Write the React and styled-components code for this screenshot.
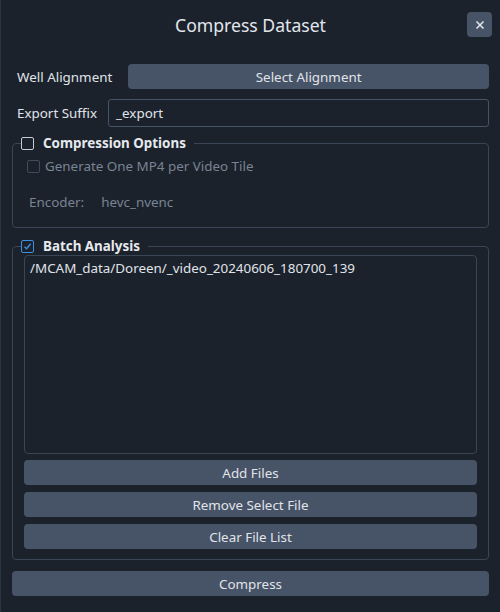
import React from 'react'
import styled, { createGlobalStyle } from 'styled-components'

const GlobalStyle = createGlobalStyle`
  html, body {
    margin: 0;
    padding: 0;
    background: #1b222c;
  }
  body {
    font-family: "Noto Sans", "DejaVu Sans", sans-serif;
    color: #dfe3e9;
  }
`

const Dialog = styled.div`
  width: 500px;
  height: 612px;
  box-sizing: border-box;
  background: #1b222c;
  border-left: 1px solid #2c3541;
  padding: 0 11px 0 11px;
  display: flex;
  flex-direction: column;
  font-size: 13.4px;
`

const Header = styled.header`
  position: relative;
  height: 49px;
  display: flex;
  align-items: center;
  justify-content: center;
`

const Title = styled.h1`
  margin: 0;
  font-size: 17.6px;
  font-weight: 400;
  color: #e2e6ec;
`

const CloseButton = styled.button`
  position: absolute;
  right: -3px;
  top: 12px;
  width: 25px;
  height: 25px;
  border: 0;
  border-radius: 4px;
  background: #475366;
  color: #e6e9ee;
  display: flex;
  align-items: center;
  justify-content: center;
  padding: 0;
`

const Row = styled.div`
  display: flex;
  align-items: center;
  gap: ${p => p.gap || 16}px;
  padding-left: 5px;
  margin-top: ${p => p.top || 0}px;
`

const Label = styled.span`
  white-space: nowrap;
  color: #e0e4ea;
`

const Button = styled.button`
  flex: ${p => (p.grow ? 1 : 'none')};
  height: 25px;
  border: 0;
  border-radius: 4px;
  background: #475366;
  color: #e0e4ea;
  font-family: inherit;
  font-size: 13.4px;
  padding: 0;
  width: 100%;
`

const Input = styled.div`
  flex: 1;
  height: 28px;
  box-sizing: border-box;
  border: 1px solid #475366;
  border-radius: 3px;
  display: flex;
  align-items: center;
  padding-left: 7px;
  color: #e0e4ea;
`

const Group = styled.fieldset`
  margin: ${p => p.top}px 0 0 0;
  padding: 0 11px 11px 11px;
  border: 1px solid #3a4555;
  border-radius: 4px;
  min-width: 0;
  height: ${p => p.h}px;
  box-sizing: border-box;
`

const Legend = styled.legend`
  display: flex;
  align-items: center;
  gap: 9px;
  padding: 0 8px 0 0;
  margin-left: -3px;
  font-weight: 700;
  color: #e6e9ee;
`

const Box = styled.span`
  width: 11px;
  height: 11px;
  border: 1px solid ${p => (p.checked ? '#3d8fe0' : p.disabled ? '#414b59' : '#c6ccd4')};
  border-radius: 2px;
  display: inline-flex;
  align-items: center;
  justify-content: center;
  flex: none;
`

const Disabled = styled.span`
  color: #7a8492;
`

const OptionRow = styled.div`
  display: flex;
  align-items: center;
  gap: 5px;
  padding-left: 3px;
  margin-top: ${p => p.top || 0}px;
`

const EncoderRow = styled.div`
  display: flex;
  gap: 17px;
  padding-left: 5px;
  margin-top: ${p => p.top || 0}px;
`

const FileList = styled.div`
  height: 199px;
  box-sizing: border-box;
  border: 1px solid #3a4555;
  border-radius: 4px;
  padding: 3px 5px;
  color: #e0e4ea;
`

const ButtonStack = styled.div`
  display: flex;
  flex-direction: column;
  gap: 7px;
  margin-top: 6px;
`

const Footer = styled.div`
  margin-top: 11px;
  display: flex;
`

const Check = ({ checked, disabled }) => (
  <Box checked={checked} disabled={disabled}>
    {checked && (
      <svg width="9" height="9" viewBox="0 0 9 9">
        <path d="M1.5 4.8 L3.6 6.8 L7.6 1.8" fill="none" stroke="#3d8fe0" strokeWidth="1.4" />
      </svg>
    )}
  </Box>
)

export default function App() {
  return (
    <>
      <GlobalStyle />
      <Dialog>
        <Header>
          <Title>Compress Dataset</Title>
          <CloseButton>
            <svg width="10" height="10" viewBox="0 0 10 10">
              <path d="M1.5 1.5 L8.5 8.5 M8.5 1.5 L1.5 8.5" stroke="#e6e9ee" strokeWidth="1.5" />
            </svg>
          </CloseButton>
        </Header>

        <Row top={15}>
          <Label>Well Alignment</Label>
          <Button grow>Select Alignment</Button>
        </Row>
        <Row top={10} gap={11}>
          <Label>Export Suffix</Label>
          <Input>_export</Input>
        </Row>

        <Group top={7} h={94}>
          <Legend>
            <Check />
            Compression Options
          </Legend>
          <OptionRow top={5}>
            <Check disabled />
            <Disabled>Generate One MP4 per Video Tile</Disabled>
          </OptionRow>
          <EncoderRow top={18}>
            <Disabled>Encoder:</Disabled>
            <Disabled>hevc_nvenc</Disabled>
          </EncoderRow>
        </Group>

        <Group top={9} h={323}>
          <Legend>
            <Check checked />
            Batch Analysis
          </Legend>
          <FileList>/MCAM_data/Doreen/_video_20240606_180700_139</FileList>
          <ButtonStack>
            <Button>Add Files</Button>
            <Button>Remove Select File</Button>
            <Button>Clear File List</Button>
          </ButtonStack>
        </Group>

        <Footer>
          <Button grow>Compress</Button>
        </Footer>
      </Dialog>
    </>
  )
}
